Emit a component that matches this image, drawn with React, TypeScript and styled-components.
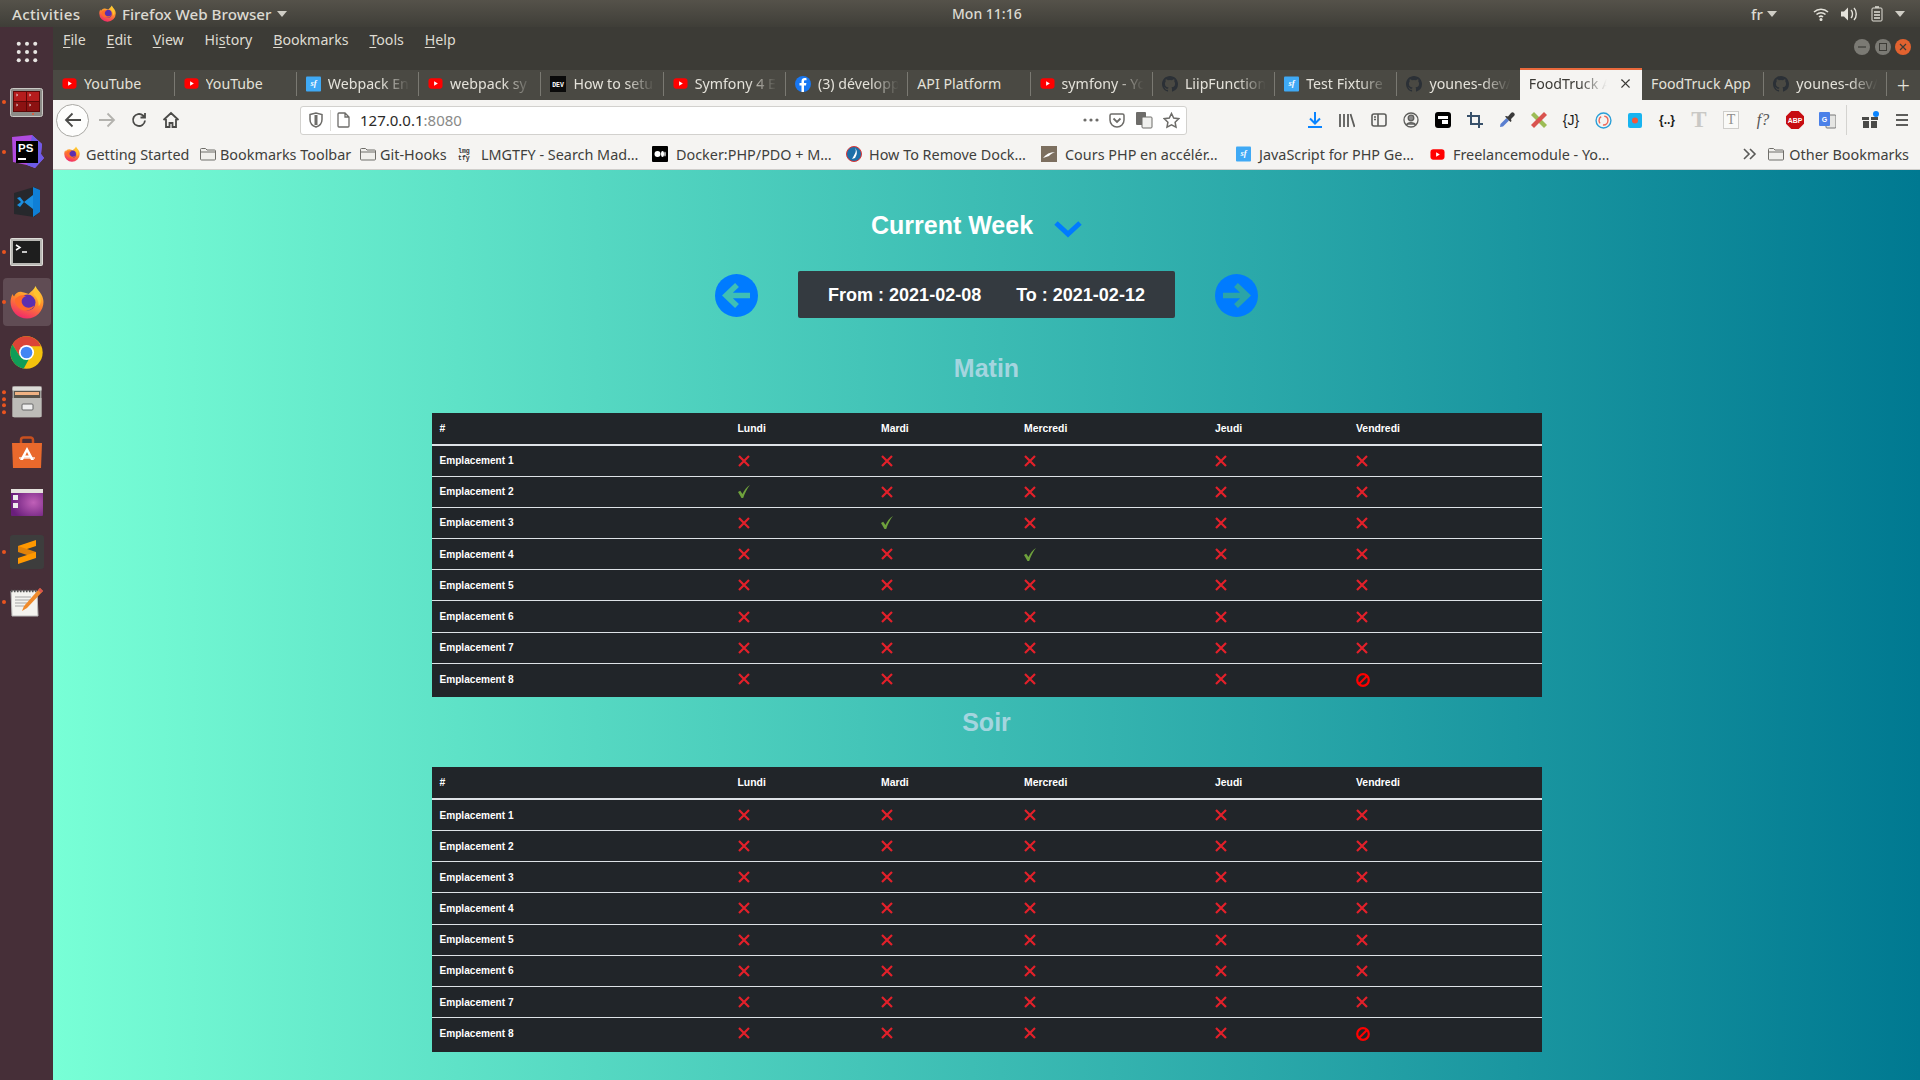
import styled, { createGlobalStyle } from 'styled-components'
import type { ReactNode } from 'react'
import { X } from 'lucide-react'

const GlobalStyle = createGlobalStyle`
    html, body { margin: 0; padding: 0; height: 100%; overflow: hidden; }
    body { font-family: "Noto Sans", sans-serif; }
    * { box-sizing: border-box; }
`

const Screen = styled.div`
    width: 1920px;
    height: 1080px;
    display: flex;
    flex-direction: column;
    overflow: hidden;
`

const TopBar = styled.div`
    height: 27px;
    flex: none;
    display: flex;
    align-items: center;
    padding: 0 15px 0 12px;
    color: #dcdad2;
    font-size: 15.2px;
    font-weight: 500;
    background: linear-gradient(#55524a, #3f3e38);
`

const BarSlot = styled.div<{ $w?: number; $size?: number; $gap?: number; $spacing?: number }>`
    display: flex;
    align-items: center;
    gap: ${p => p.$gap ?? 4}px;
    width: ${p => (p.$w ? `${p.$w}px` : 'auto')};
    font-size: ${p => (p.$size ? `${p.$size}px` : 'inherit')};
    letter-spacing: ${p => p.$spacing ?? 0}px;
    white-space: nowrap;
`

const Body = styled.div`
    flex: 1;
    display: flex;
    min-height: 0;
`

const Dock = styled.aside`
    width: 53px;
    flex: none;
    display: flex;
    flex-direction: column;
    align-items: center;
    background: #462f38;
`

const DockItem = styled.div<{ $active?: boolean }>`
    position: relative;
    width: 48px;
    height: 48px;
    margin: 1px 0;
    display: flex;
    align-items: center;
    justify-content: center;
    border-radius: 4px;
    background: ${p => (p.$active ? 'rgba(255,255,255,0.14)' : 'transparent')};
`

const Pips = styled.div`
    position: absolute;
    left: -0.5px;
    top: 50%;
    transform: translateY(-50%);
    display: flex;
    flex-direction: column;
    gap: 2.5px;
`

const Pip = styled.span`
    width: 4px;
    height: 4px;
    border-radius: 50%;
    background: #e95420;
`

const Main = styled.div`
    flex: 1;
    min-width: 0;
    display: flex;
    flex-direction: column;
`

const MenuBar = styled.div`
    height: 43px;
    flex: none;
    display: flex;
    align-items: flex-start;
    justify-content: space-between;
    background: #3c3b36;
    color: #dfdbd2;
    font-size: 14.2px;
    padding: 3px 9px 0 10px;
`

const MenuList = styled.div`
    display: flex;
    gap: 20.8px;

    u { text-underline-offset: 2px; }
`

const WindowButtons = styled.div`
    display: flex;
    gap: 4.5px;
    margin-top: 9px;
`

const WinButton = styled.span<{ $close?: boolean }>`
    width: 16px;
    height: 16px;
    border-radius: 50%;
    display: flex;
    align-items: center;
    justify-content: center;
    background: ${p => (p.$close ? '#e2622f' : '#7b7a74')};
    color: #3c3b36;
`

const TabStrip = styled.div`
    height: 30px;
    flex: none;
    display: flex;
    align-items: stretch;
    background: #4a4943;
    color: #e4e2da;
    font-size: 14.2px;
`

const Tab = styled.div<{ $active?: boolean; $w: number; $sep?: boolean }>`
    width: ${p => p.$w}px;
    flex: none;
    display: flex;
    align-items: center;
    gap: 7px;
    padding: 0 5px 3px 9px;
    margin-top: ${p => (p.$active ? '-2px' : '0')};
    white-space: nowrap;
    position: relative;
    background: ${p => (p.$active ? '#f5f4f2' : 'transparent')};
    color: ${p => (p.$active ? '#3b3a36' : '#e4e2da')};
    border-top: ${p => (p.$active ? '2px solid #e9693c' : 'none')};

    ${p =>
        p.$sep &&
        `&::after {
            content: '';
            position: absolute;
            right: 0;
            top: 2px;
            bottom: 4px;
            width: 1px;
            background: #7a7972;
        }`}
`

const TabTitle = styled.span<{ $fade?: boolean }>`
    flex: 1;
    overflow: hidden;
    ${p => p.$fade && 'mask-image: linear-gradient(to right, #000 62%, transparent 95%);'}
`

const TabClose = styled.span`
    display: flex;
    margin-right: 4px;
`

const NewTab = styled.div`
    flex: 1;
    display: flex;
    align-items: center;
    justify-content: center;
    font-size: 23px;
    font-weight: 300;
    color: #e4e2da;
`

const NavBar = styled.div`
    height: 40px;
    flex: none;
    display: flex;
    align-items: center;
    background: #f5f4f2;
    padding: 0 2px 0 3px;
`

const NavGroup = styled.div`
    display: flex;
    align-items: center;
    color: #4a4a48;
    gap: 14px;
    width: 244px;
`

const BackButton = styled.div`
    width: 33px;
    height: 33px;
    border-radius: 50%;
    border: 1px solid #a9a8a4;
    background: #fdfdfc;
    display: flex;
    align-items: center;
    justify-content: center;
    margin-right: -1px;
`

const UrlBar = styled.div`
    width: 887px;
    height: 29px;
    flex: none;
    display: flex;
    align-items: center;
    background: #fff;
    border: 1px solid #d2d1ce;
    border-radius: 3px;
    padding: 0 6px 0 8px;
    font-size: 15px;
    color: #2b2a28;
`

const UrlText = styled.div`
    flex: 1;
    display: flex;
    align-items: center;
    gap: 10px;
    margin-left: 7px;
    padding-left: 6px;
    border-left: 1px solid #dddcd9;
    height: 21px;

    span span { color: #8a8a88; }
`

const UrlActions = styled.div`
    display: flex;
    align-items: center;
    gap: 10px;
`

const ToolIcons = styled.div`
    flex: 1;
    display: flex;
    align-items: center;
    justify-content: flex-end;
    height: 34px;
`

const ToolIcon = styled.div`
    width: 32px;
    height: 30px;
    display: flex;
    align-items: center;
    justify-content: center;
    color: #4a4a48;
`

const ToolText = styled.span<{ $color?: string; $size?: number; $bold?: boolean; $italic?: boolean; $serif?: boolean }>`
    font-family: ${p => (p.$serif ? '"Liberation Serif", serif' : '"Liberation Sans", sans-serif')};
    font-size: ${p => p.$size ?? 14}px;
    font-weight: ${p => (p.$bold ? 700 : 400)};
    font-style: ${p => (p.$italic ? 'italic' : 'normal')};
    color: ${p => p.$color ?? '#1c1c1c'};
    white-space: nowrap;
`

const DocBox = styled.span`
    width: 16px;
    height: 18px;
    display: flex;
    align-items: center;
    justify-content: center;
    border: 1px solid #cfcecb;
    background: #fafaf8;
`

const ToolDivider = styled.div`
    width: 1px;
    height: 30px;
    background: #d4d3d0;
    margin: 0 7px 0 3px;
`

const BookmarkBar = styled.div`
    height: 30px;
    flex: none;
    display: flex;
    align-items: center;
    background: #f5f4f2;
    border-bottom: 1px solid #cfcecb;
    color: #403f3c;
    font-size: 14.4px;
    padding: 0 11px 1px 11px;
`

const Bookmark = styled.div<{ $w: number; $gap: number }>`
    width: ${p => p.$w}px;
    flex: none;
    display: flex;
    align-items: center;
    gap: ${p => p.$gap}px;
    white-space: nowrap;
`

const BookmarkEnd = styled.div`
    margin-left: auto;
    display: flex;
    align-items: center;
    gap: 5px;
    white-space: nowrap;

    svg:first-child { margin-right: 6px; }
`

const Page = styled.main`
    flex: 1;
    min-height: 0;
    background: linear-gradient(to right, #78ffd6, #007991);
    font-family: "Liberation Sans", Arial, sans-serif;
    display: flex;
    flex-direction: column;
    align-items: center;
    padding-top: 36px;
`

const WeekTitle = styled.div`
    height: 38px;
    display: flex;
    align-items: center;
    gap: 21px;
    margin-right: 20px;
    color: #fff;
    font-size: 25px;
    font-weight: 700;
`

const WeekNav = styled.div`
    margin-top: 27px;
    display: flex;
    align-items: center;
    gap: 40px;
`

const DateBox = styled.div`
    width: 377px;
    height: 47px;
    padding-top: 1px;
    display: flex;
    align-items: center;
    justify-content: center;
    gap: 35px;
    background: #343a40;
    border-radius: 2px;
    color: #fff;
    font-size: 18px;
    font-weight: 700;
`

const ArrowIcon = styled.svg`
    display: block;
    margin-top: 2px;
`

const Period = styled.h2<{ $top: number }>`
    margin: ${p => p.$top}px 0 27px;
    height: 36px;
    display: flex;
    align-items: center;
    font-size: 25px;
    font-weight: 700;
    color: #a4d5df;
`

const Slots = styled.table`
    width: 1110px;
    table-layout: fixed;
    border-collapse: collapse;
    background: #212529;
    color: #fff;
    font-size: 10.4px;
    font-weight: 700;
`

const HeadCell = styled.th`
    height: 32px;
    padding: 0 8px;
    text-align: left;
    vertical-align: middle;
    border-bottom: 2px solid #dee2e6;
`

const Cell = styled.td`
    height: 31.2px;
    padding: 0 8px;
    font-size: 10.1px;
    vertical-align: middle;
    border-bottom: 1px solid #dee2e6;

    tr:last-child & { border-bottom: none; height: 34px; padding-bottom: 3px; }
`

const Mark = styled.svg`
    display: block;
`

const youtube = (
    <svg width="15" height="15" viewBox="0 0 16 16">
        <rect x="0.5" y="2.5" width="15" height="11" rx="3" fill="#f00" />
        <path d="M6.5 5.5v5l4-2.5z" fill="#fff" />
    </svg>
)

const symfonyCasts = (
    <svg width="15" height="16" viewBox="0 0 16 16">
        <rect width="16" height="16" rx="1" fill="#3fa9f5" />
        <text x="8" y="10" fontSize="9" fontStyle="italic" fontWeight="700" fontFamily="Liberation Serif" fill="#fff" textAnchor="middle">sf</text>
    </svg>
)

const github = (color: string) => (
    <svg width="16" height="16" viewBox="0 0 16 16" fill={color}>
        <path d="M8 0C3.58 0 0 3.58 0 8c0 3.54 2.29 6.53 5.47 7.59.4.07.55-.17.55-.38v-1.34c-2.23.48-2.7-1.07-2.7-1.07-.36-.92-.89-1.17-.89-1.17-.73-.5.05-.49.05-.49.8.06 1.23.83 1.23.83.71 1.22 1.87.87 2.33.66.07-.52.28-.87.5-1.07-1.78-.2-3.64-.89-3.64-3.95 0-.87.31-1.59.82-2.15-.08-.2-.36-1.02.08-2.12 0 0 .67-.21 2.2.82a7.7 7.7 0 0 1 4 0c1.53-1.04 2.2-.82 2.2-.82.44 1.1.16 1.92.08 2.12.51.56.82 1.27.82 2.15 0 3.07-1.87 3.75-3.65 3.95.29.25.54.73.54 1.48v2.2c0 .21.15.46.55.38A8 8 0 0 0 16 8c0-4.42-3.58-8-8-8z" />
    </svg>
)

const firefox = (size: number) => (
    <svg width={size} height={size} viewBox="0 0 32 32">
        <defs>
            <linearGradient id={`fx${size}`} x1="0.7" y1="0" x2="0.3" y2="1">
                <stop offset="0" stopColor="#ffd43a" />
                <stop offset="0.45" stopColor="#ff8a2b" />
                <stop offset="1" stopColor="#f0246e" />
            </linearGradient>
        </defs>
        <path d="M24 1c1 3 4 5 5.500 8 1.500 2.500 2 5 2 7A15.500 15.500 0 0 1 .5 16c0-2 .5-5 2-7.500.3 1 .7 1.800 1.300 2.300C5 8 8 6 11 6.500c3 .3 5 1.500 6.500 2C20 6 23 4 24 1z" fill={`url(#fx${size})`} />
        <circle cx="16.500" cy="16.500" r="7.500" fill="#5b2fb0" />
        <path d="M5 13c3-3 7-4.500 10-2.500-2 .5-3.500 2-4 4-.3 2.500 1 5 4 6.500 3 1 6 0 8-2-2 5-9 7-14 3-3-2.500-5-6-4-9z" fill="#ff6a2b" />
        <path d="M24 3c2 3 5 6 5 12 0 2-1 4-2 5 0-4-1-8-5-11z" fill="#ffc42e" />
    </svg>
)

const folder = (
    <svg width="16" height="14" viewBox="0 0 16 14" fill="#f0efec" stroke="#6f6e6a">
        <path d="M.5 2.500a1 1 0 0 1 1-1h4l1.500 1.500h7.500a1 1 0 0 1 1 1v8a1 1 0 0 1-1 1h-13a1 1 0 0 1-1-1z" />
        <path d="M.5 5h15" />
    </svg>
)

const dockIcons: { icon: ReactNode; pips: number; active?: boolean }[] = [
    {
        pips: 1,
        icon: (
            <svg width="33" height="29" viewBox="0 0 33 29">
                <rect x="0.5" y="0.5" width="32" height="28" rx="2" fill="#8c8b87" stroke="#c9c8c4" />
                <rect x="3" y="3" width="27" height="21" fill="#5c0808" />
                <rect x="4" y="4" width="12" height="9" fill="#b41d1d" />
                <rect x="17" y="4" width="12" height="9" fill="#b41d1d" />
                <rect x="4" y="14" width="12" height="9" fill="#8c1212" />
                <rect x="17" y="14" width="12" height="9" fill="#8c1212" />
                <path d="M6 6l2 1-2 1M19 6l2 1-2 1M6 16l2 1-2 1M19 16l2 1-2 1" stroke="#eee" strokeWidth="0.6" fill="none" />
                <circle cx="23" cy="26" r="1" fill="#e53" />
            </svg>
        ),
    },
    {
        pips: 1,
        icon: (
            <svg width="34" height="34" viewBox="0 0 34 34">
                <path d="M2 2l20-2 10 9-1 10 3 4-9 10-8-3-5-1-9-2z" fill="#b04be0" />
                <path d="M22 0l10 9-1 10 3 4-9 10-8-3z" fill="#6d5ce8" />
                <rect x="6" y="6" width="22" height="22" fill="#000" />
                <text x="8" y="17" fontSize="11.500" fontWeight="700" fontFamily="Liberation Sans" fill="#fff">PS</text>
                <rect x="8" y="23" width="8" height="2" fill="#fff" />
            </svg>
        ),
    },
    {
        pips: 0,
        icon: (
            <svg width="28" height="30" viewBox="0 0 28 30">
                <path d="M1 6l20-6 6 3v22l-6 5-20-3z" fill="#26282c" />
                <path d="M20 0l7 3v22l-7 5z" fill="#0f7fd6" />
                <path d="M20 8l-9 7 9 7zM4 11l3-1 4 5-4 5-3-2 4-3z" fill="#1b8fe0" />
            </svg>
        ),
    },
    {
        pips: 1,
        icon: (
            <svg width="33" height="28" viewBox="0 0 33 28">
                <rect x="0.5" y="0.5" width="32" height="27" rx="1" fill="#b9b8b4" stroke="#dedcd8" />
                <rect x="3" y="3" width="27" height="22" fill="#1e1e1e" />
                <path d="M6 7l4 2.500-4 2.500" fill="none" stroke="#fff" strokeWidth="1.500" />
                <path d="M12 14h5" stroke="#fff" strokeWidth="1.500" />
            </svg>
        ),
    },
    { pips: 1, active: true, icon: firefox(34) },
    {
        pips: 0,
        icon: (
            <svg width="33" height="33" viewBox="0 0 48 48">
                <circle cx="24" cy="24" r="23.500" fill="#f4c20d" />
                <path d="M24 .5A23.500 23.500 0 0 0 3.600 12.200L14 29l10-14h20.900A23.500 23.500 0 0 0 24 .5z" fill="#db4437" />
                <path d="M3.600 12.200A23.500 23.500 0 0 0 20 47.200L29 31 14 29z" fill="#0f9d58" />
                <circle cx="24" cy="24" r="11" fill="#fff" />
                <circle cx="24" cy="24" r="8.500" fill="#4285f4" />
            </svg>
        ),
    },
    {
        pips: 4,
        icon: (
            <svg width="30" height="32" viewBox="0 0 30 32">
                <rect x="0.5" y="0.5" width="29" height="31" rx="2" fill="#a3a29e" />
                <rect x="0.5" y="0.5" width="29" height="4" fill="#dcdbd7" />
                <rect x="2" y="5" width="26" height="7" fill="#59534a" />
                <rect x="3" y="6" width="24" height="3" fill="#f0b182" />
                <rect x="0.5" y="12" width="29" height="19" fill="#bdbcb8" />
                <rect x="10" y="18" width="11" height="6" rx="1" fill="#eee" stroke="#666" />
            </svg>
        ),
    },
    {
        pips: 0,
        icon: (
            <svg width="30" height="32" viewBox="0 0 30 32">
                <path d="M0 7h30l-1 25H1z" fill="#e9692c" />
                <path d="M9 7V4a2.500 2.500 0 0 1 2.500-2.500h7A2.500 2.500 0 0 1 21 4v3" fill="none" stroke="#c8501f" strokeWidth="2.500" />
                <path d="M15 11l-7 13h3l1.200-2.500h5.600L19 24h3zm0 5l1.700 3.500h-3.400z" fill="#fff" />
                <path d="M7 22h16" stroke="#fff" strokeWidth="1.200" />
            </svg>
        ),
    },
    {
        pips: 0,
        icon: (
            <svg width="32" height="27" viewBox="0 0 32 27">
                <defs>
                    <radialGradient id="dash" cx="0.7" cy="0.5" r="0.7">
                        <stop offset="0" stopColor="#c060b8" />
                        <stop offset="1" stopColor="#6a1f7c" />
                    </radialGradient>
                </defs>
                <rect width="32" height="27" rx="1" fill="url(#dash)" />
                <rect width="32" height="4" fill="#e5e3de" />
                <rect x="2" y="6" width="5" height="5" fill="#eee" />
                <rect x="2" y="14" width="5" height="5" fill="#eee" />
            </svg>
        ),
    },
    {
        pips: 1,
        icon: (
            <svg width="34" height="34" viewBox="0 0 34 34">
                <rect width="34" height="34" rx="3" fill="#3d3d3d" />
                <path d="M26 5L8 11v6l18-6z" fill="#ff9800" />
                <path d="M8 17l18 6v-6L8 11z" fill="#e0820a" />
                <path d="M26 23L8 29v-6l18-6z" fill="#ff9800" />
            </svg>
        ),
    },
    {
        pips: 1,
        icon: (
            <svg width="33" height="29" viewBox="0 0 33 29">
                <path d="M1 3h26l1 25H2z" fill="#f4f3ef" stroke="#bbb" />
                <path d="M1 3h26" stroke="#555" strokeWidth="2.500" strokeDasharray="1.500 1.500" />
                <path d="M5 9h16M5 12h16M5 15h12M5 18h9" stroke="#a5a5a5" />
                <path d="M30 0l3 3-16 17-5 3 2-5z" fill="#ef8a2b" />
                <path d="M30 0l3 3-2 2-3-3z" fill="#d9534f" />
            </svg>
        ),
    },
]

const tabs: { title: string; w: number; icon?: ReactNode; fade?: boolean; active?: boolean; close?: boolean }[] = [
    { title: 'YouTube', w: 121.5, icon: youtube },
    { title: 'YouTube', w: 122.3, icon: youtube },
    { title: 'Webpack En', w: 122.3, icon: symfonyCasts, fade: true },
    { title: 'webpack sy', w: 122.3, icon: youtube, fade: true },
    {
        title: 'How to setu',
        w: 122.3,
        fade: true,
        icon: (
            <svg width="16" height="16" viewBox="0 0 16 16">
                <rect width="16" height="16" fill="#0a0a0a" />
                <text x="8" y="11" fontSize="6.500" fontWeight="700" fontFamily="Liberation Mono" fill="#fff" textAnchor="middle">DEV</text>
            </svg>
        ),
    },
    { title: 'Symfony 4 E', w: 122.3, icon: youtube, fade: true },
    {
        title: '(3) développ',
        w: 122.3,
        fade: true,
        icon: (
            <svg width="16" height="16" viewBox="0 0 16 16">
                <circle cx="8" cy="8" r="8" fill="#1877f2" />
                <path d="M9 16V9.500h2l.400-2.500H9V5.500c0-.7.300-1.200 1.300-1.200h1.200V2.200C11 2.100 10.400 2 9.700 2 7.800 2 6.500 3.200 6.500 5.200V7H4.500v2.500h2V16z" fill="#fff" />
            </svg>
        ),
    },
    { title: 'API Platform', w: 122.3 },
    { title: 'symfony - Yo', w: 122.3, icon: youtube, fade: true },
    { title: 'LiipFunction', w: 122.3, icon: github('#2b3036'), fade: true },
    { title: 'Test Fixture', w: 122.3, icon: symfonyCasts, fade: true },
    { title: 'younes-dev/', w: 122.3, icon: github('#2b3036'), fade: true },
    { title: 'FoodTruck A', w: 122.3, active: true, close: true, fade: true },
    { title: 'FoodTruck App', w: 122.3 },
    { title: 'younes-dev/', w: 122.3, icon: github('#2b3036'), fade: true },
]

const bookmarks: { title: string; w: number; gap: number; icon: ReactNode }[] = [
    { title: 'Getting Started', w: 136, gap: 6, icon: firefox(16) },
    { title: 'Bookmarks Toolbar', w: 160, gap: 4, icon: folder },
    { title: 'Git-Hooks', w: 97, gap: 4, icon: folder },
    {
        title: 'LMGTFY - Search Mad…',
        w: 195,
        gap: 8,
        icon: (
            <svg width="16" height="16" viewBox="0 0 16 16" fontFamily="Liberation Mono" fontSize="6.500" fontWeight="700" fill="#333">
                <text x="1" y="7">lmg</text>
                <text x="1" y="14">tfy</text>
            </svg>
        ),
    },
    {
        title: 'Docker:PHP/PDO + M…',
        w: 194,
        gap: 8,
        icon: (
            <svg width="16" height="16" viewBox="0 0 16 16">
                <rect width="16" height="16" rx="1" fill="#000" />
                <circle cx="5.500" cy="8" r="3" fill="#fff" />
                <ellipse cx="10.500" cy="8" rx="1.500" ry="3" fill="#fff" />
                <ellipse cx="13" cy="8" rx="0.700" ry="2.600" fill="#fff" />
            </svg>
        ),
    },
    {
        title: 'How To Remove Dock…',
        w: 195,
        gap: 7,
        icon: (
            <svg width="16" height="16" viewBox="0 0 16 16">
                <circle cx="8" cy="8" r="7.500" fill="#1d6fa8" stroke="#d33" />
                <path d="M9 2c2 3 0 6-3 11l3-1c2-3 3-7 0-10z" fill="#fff" />
            </svg>
        ),
    },
    {
        title: 'Cours PHP en accélér…',
        w: 195,
        gap: 8,
        icon: (
            <svg width="16" height="16" viewBox="0 0 16 16">
                <rect width="16" height="16" fill="#7c6f5f" />
                <path d="M2 12c3-4 7-6 12-6-3 1-5 3-6 4z" fill="#fff" />
            </svg>
        ),
    },
    { title: 'JavaScript for PHP Ge…', w: 194, gap: 8, icon: symfonyCasts },
    { title: 'Freelancemodule - Yo…', w: 200, gap: 8, icon: youtube },
]

const days = ['Lundi', 'Mardi', 'Mercredi', 'Jeudi', 'Vendredi']
const columnWidths = [298, 143.5, 143, 191, 141, 193.5]

type Status = 'no' | 'yes' | 'ban'

const morning: Status[][] = Array.from({ length: 8 }, (_, row) =>
    days.map((_, col) => (row === 7 && col === 4 ? 'ban' : row >= 1 && row <= 3 && row - 1 === col ? 'yes' : 'no')),
)
const evening: Status[][] = Array.from({ length: 8 }, (_, row) =>
    days.map((_, col) => (row === 7 && col === 4 ? 'ban' : 'no')),
)

const StatusMark = ({ status }: { status: Status }) => {
    if (status === 'yes') {
        return (
            <Mark width="12" height="13" viewBox="0 0 12 13">
                <path d="M0 7l2.200-1.200L4.500 9C6 5.500 8.500 2 12 0 9 3.500 7 8 5.200 13H3.500z" fill="#6ea13c" />
            </Mark>
        )
    }
    if (status === 'ban') {
        return (
            <Mark width="14" height="14" viewBox="0 0 14 14" fill="none" stroke="#f00" strokeWidth="2.200" style={{ marginTop: 2 }}>
                <circle cx="7" cy="7" r="5.800" />
                <path d="M3 11l8-8" />
            </Mark>
        )
    }
    return (
        <Mark width="12" height="12" viewBox="0 0 12 12" fill="none" stroke="#e3202a" strokeWidth="2.200">
            <path d="M1 1l10 10M11 1L1 11" />
        </Mark>
    )
}

const SlotTable = ({ rows }: { rows: Status[][] }) => (
    <Slots>
        <colgroup>
            {columnWidths.map((w, i) => (
                <col key={i} width={w} />
            ))}
        </colgroup>
        <thead>
            <tr>
                <HeadCell>#</HeadCell>
                {days.map(day => (
                    <HeadCell key={day}>{day}</HeadCell>
                ))}
            </tr>
        </thead>
        <tbody>
            {rows.map((row, i) => (
                <tr key={i}>
                    <Cell>Emplacement {i + 1}</Cell>
                    {row.map((status, j) => (
                        <Cell key={j}>
                            <StatusMark status={status} />
                        </Cell>
                    ))}
                </tr>
            ))}
        </tbody>
    </Slots>
)

const ArrowButton = ({ dir }: { dir: 'left' | 'right' }) => (
    <ArrowIcon width="43" height="43" viewBox="0 0 43 43">
        <circle cx="21.500" cy="21.500" r="21.500" fill="#007bff" />
        <path
            d={dir === 'left' ? 'M35 21.500H12M22 11L11 21.500 22 32' : 'M8 21.500h23M21 11l11 10.500L21 32'}
            fill="none"
            stroke={dir === 'left' ? '#3fbfb5' : '#2ba4a8'}
            strokeWidth="5.500"
        />
    </ArrowIcon>
)

const caret = (
    <svg width="10" height="6" viewBox="0 0 10 6" fill="#cfcdc5"><path d="M0 0h10L5 6z" /></svg>
)

export default function App() {
    return (
        <Screen>
            <GlobalStyle />
            <TopBar>
                <BarSlot $w={87} $spacing={0.3}>Activities</BarSlot>
                <BarSlot $w={853} $gap={6}>
                    {firefox(17)}
                    <span>Firefox Web Browser</span>
                    {caret}
                </BarSlot>
                <BarSlot $w={799} $size={14}>Mon 11:16</BarSlot>
                <BarSlot $w={62}>
                    fr
                    {caret}
                </BarSlot>
                <BarSlot>
                    <svg width="16" height="14" viewBox="0 0 16 14" fill="none" stroke="#e4e2da" strokeWidth="1.500">
                        <path d="M1 5a10 10 0 0 1 14 0M3.500 7.500a6.500 6.500 0 0 1 9 0M6 10a3 3 0 0 1 4 0" />
                        <circle cx="8" cy="12.500" r="0.800" fill="#e4e2da" />
                    </svg>
                    <svg width="18" height="14" viewBox="0 0 18 14" fill="#e4e2da" style={{ marginLeft: 8 }}>
                        <path d="M0 4.500h3l4-4v13l-4-4H0z" />
                        <path d="M10 3c2 2 2 6 0 8M13 1c3 3 3 9 0 12" fill="none" stroke="#e4e2da" strokeWidth="1.400" />
                    </svg>
                    <svg width="12" height="16" viewBox="0 0 12 16" fill="none" stroke="#e4e2da" style={{ marginLeft: 8 }}>
                        <rect x="1" y="2" width="10" height="13" rx="1" />
                        <path d="M4 1h4M3 6h6M3 9h6M3 12h6" strokeWidth="1.500" />
                    </svg>
                    <svg width="10" height="6" viewBox="0 0 10 6" fill="#cfcdc5" style={{ marginLeft: 8 }}><path d="M0 0h10L5 6z" /></svg>
                </BarSlot>
            </TopBar>
            <Body>
                <Dock>
                    <DockItem>
                        <svg width="22" height="22" viewBox="0 0 24 24" fill="#e8e6e3">
                            {[3, 12, 21].flatMap(y =>
                                [3, 12, 21].map(x => <circle key={`${x}${y}`} cx={x} cy={y} r="2.200" />),
                            )}
                        </svg>
                    </DockItem>
                    {dockIcons.map((item, i) => (
                        <DockItem key={i} $active={item.active}>
                            <Pips>
                                {Array.from({ length: item.pips }, (_, k) => (
                                    <Pip key={k} />
                                ))}
                            </Pips>
                            {item.icon}
                        </DockItem>
                    ))}
                </Dock>
                <Main>
                    <MenuBar>
                        <MenuList>
                            <span><u>F</u>ile</span>
                            <span><u>E</u>dit</span>
                            <span><u>V</u>iew</span>
                            <span>Hi<u>s</u>tory</span>
                            <span><u>B</u>ookmarks</span>
                            <span><u>T</u>ools</span>
                            <span><u>H</u>elp</span>
                        </MenuList>
                        <WindowButtons>
                            <WinButton>
                                <svg width="8" height="2" viewBox="0 0 8 2"><path d="M0 1h8" stroke="#3c3b36" strokeWidth="1.200" /></svg>
                            </WinButton>
                            <WinButton>
                                <svg width="8" height="8" viewBox="0 0 8 8" fill="none"><rect x="0.5" y="0.5" width="7" height="7" stroke="#3c3b36" /></svg>
                            </WinButton>
                            <WinButton $close>
                                <svg width="8" height="8" viewBox="0 0 8 8"><path d="M1 1l6 6M7 1L1 7" stroke="#3c3b36" strokeWidth="1.200" /></svg>
                            </WinButton>
                        </WindowButtons>
                    </MenuBar>
                    <TabStrip>
                        {tabs.map((tab, i) => (
                            <Tab key={i} $w={tab.w} $active={tab.active} $sep={!tab.active && i !== 11}>
                                {tab.icon}
                                <TabTitle $fade={tab.fade}>{tab.title}</TabTitle>
                                {tab.close && (
                                    <TabClose>
                                        <X size={15} strokeWidth={1.8} />
                                    </TabClose>
                                )}
                            </Tab>
                        ))}
                        <NewTab>+</NewTab>
                    </TabStrip>
                    <NavBar>
                        <NavGroup>
                            <BackButton>
                                <svg width="18" height="16" viewBox="0 0 18 16" fill="none" stroke="#4a4a48" strokeWidth="1.800">
                                    <path d="M17 8H2M8.500 1.500L2 8l6.500 6.500" />
                                </svg>
                            </BackButton>
                            <svg width="18" height="16" viewBox="0 0 18 16" fill="none" stroke="#b3b2ae" strokeWidth="1.800" style={{ marginLeft: -4 }}>
                                <path d="M1 8h15M9.500 1.500L16 8l-6.500 6.500" />
                            </svg>
                            <svg width="18" height="18" viewBox="0 0 18 18" fill="none" stroke="#4a4a48" strokeWidth="1.800">
                                <path d="M15 9.500A6 6 0 1 1 13 4.500L15 6.500M15 2v4.500h-4.500" />
                            </svg>
                            <svg width="18" height="18" viewBox="0 0 18 18" fill="none" stroke="#4a4a48" strokeWidth="1.800">
                                <path d="M1.500 9L9 2l7.500 7M4 8v8h3.500v-4h3v4H14V8" />
                            </svg>
                        </NavGroup>
                        <UrlBar>
                            <svg width="14" height="16" viewBox="0 0 14 16" fill="none" stroke="#6d6c69" strokeWidth="1.500">
                                <path d="M1 2.500L7 1l6 1.500v5c0 4-3 6.500-6 7.500-3-1-6-3.500-6-7.500z" />
                                <path d="M7 3v10" strokeWidth="3" />
                            </svg>
                            <UrlText>
                                <svg width="13" height="16" viewBox="0 0 13 16" fill="none" stroke="#6d6c69" strokeWidth="1.300">
                                    <path d="M1 2a1 1 0 0 1 1-1h6l4 4v9a1 1 0 0 1-1 1H2a1 1 0 0 1-1-1zM8 1v4h4" />
                                </svg>
                                <span>127.0.0.1<span>:8080</span></span>
                            </UrlText>
                            <UrlActions>
                                <svg width="16" height="4" viewBox="0 0 16 4" fill="#6d6c69">
                                    <circle cx="2" cy="2" r="1.600" /><circle cx="8" cy="2" r="1.600" /><circle cx="14" cy="2" r="1.600" />
                                </svg>
                                <svg width="16" height="15" viewBox="0 0 16 15" fill="none" stroke="#6d6c69" strokeWidth="1.500">
                                    <path d="M1 2.500A1.500 1.500 0 0 1 2.500 1h11A1.500 1.500 0 0 1 15 2.500V7a7 7 0 0 1-14 0z" />
                                    <path d="M4.500 5.500L8 9l3.500-3.500" strokeWidth="1.800" />
                                </svg>
                                <svg width="18" height="18" viewBox="0 0 18 18">
                                    <rect x="1" y="1" width="10" height="13" rx="1" fill="#6d6c69" />
                                    <rect x="7" y="6" width="10" height="11" rx="1" fill="#f0f0ee" stroke="#6d6c69" />
                                </svg>
                                <svg width="17" height="17" viewBox="0 0 17 17" fill="none" stroke="#6d6c69" strokeWidth="1.500">
                                    <path d="M8.500 1.500l2.200 4.500 5 .7-3.600 3.500.9 5-4.500-2.400L4 15.200l.9-5L1.300 6.700l5-.7z" />
                                </svg>
                            </UrlActions>
                        </UrlBar>
                        <ToolIcons>
                            <ToolIcon>
                                <svg width="16" height="16" viewBox="0 0 16 16" fill="none" stroke="#0a84ff" strokeWidth="2">
                                    <path d="M8 0v11M3 6.500L8 11.500l5-5M1 15h14" />
                                </svg>
                            </ToolIcon>
                            <ToolIcon>
                                <svg width="16" height="15" viewBox="0 0 16 15" stroke="#5d5d5b" strokeWidth="1.800" fill="none">
                                    <path d="M1 1v13M5 1v13M9 1v13M11.500 1l4 13" />
                                </svg>
                            </ToolIcon>
                            <ToolIcon>
                                <svg width="16" height="14" viewBox="0 0 16 14" fill="none" stroke="#5d5d5b" strokeWidth="1.600">
                                    <rect x="1" y="1" width="14" height="12" rx="2" />
                                    <path d="M7 1v12M3 4h2M3 6.500h2" />
                                </svg>
                            </ToolIcon>
                            <ToolIcon>
                                <svg width="16" height="16" viewBox="0 0 16 16" fill="none" stroke="#5d5d5b" strokeWidth="1.300">
                                    <circle cx="8" cy="8" r="7" />
                                    <circle cx="8" cy="6" r="2.800" fill="#888" />
                                    <path d="M3.500 13c1-3 8-3 9 0" fill="#888" />
                                </svg>
                            </ToolIcon>
                            <ToolIcon>
                                <svg width="16" height="16" viewBox="0 0 16 16">
                                    <rect width="16" height="16" rx="3" fill="#000" />
                                    <path d="M3 4h10v3H3zM7 8h6v4H7z" fill="#fff" />
                                </svg>
                            </ToolIcon>
                            <ToolIcon>
                                <svg width="16" height="16" viewBox="0 0 16 16" fill="none" stroke="#38506a" strokeWidth="2">
                                    <path d="M4 0v12h12M0 4h12v12" />
                                </svg>
                            </ToolIcon>
                            <ToolIcon>
                                <svg width="16" height="16" viewBox="0 0 16 16">
                                    <path d="M1 15l.5-3 6-6 2.500 2.500-6 6z" fill="#5a7fd0" />
                                    <path d="M7 4l2 .5 3-3.500a2 2 0 0 1 3 3l-3 3 .5 2-1 1-5.500-5.500z" fill="#3a3a3a" />
                                </svg>
                            </ToolIcon>
                            <ToolIcon>
                                <svg width="18" height="18" viewBox="0 0 18 18">
                                    <path d="M1 4l3-3 13 13-3 3z" fill="#9cbc55" />
                                    <path d="M17 4l-3-3L1 14l3 3z" fill="#d9534f" />
                                </svg>
                            </ToolIcon>
                            <ToolIcon><ToolText>{'{J}'}</ToolText></ToolIcon>
                            <ToolIcon>
                                <svg width="17" height="17" viewBox="0 0 16 16" fill="none">
                                    <circle cx="8" cy="8" r="7" stroke="#2a9fd8" strokeWidth="1.300" />
                                    <circle cx="8" cy="8" r="4.200" stroke="#e65" strokeWidth="1.300" strokeDasharray="7 3" />
                                </svg>
                            </ToolIcon>
                            <ToolIcon>
                                <svg width="14" height="15" viewBox="0 0 14 15">
                                    <rect width="14" height="15" rx="2" fill="#18b4f0" />
                                    <circle cx="7" cy="7.500" r="3" fill="#f4573a" />
                                </svg>
                            </ToolIcon>
                            <ToolIcon><ToolText $bold $size={12}>{'{..}'}</ToolText></ToolIcon>
                            <ToolIcon><ToolText $serif $bold $size={23} $color="#c9c8c5">T</ToolText></ToolIcon>
                            <ToolIcon>
                                <DocBox><ToolText $serif $size={14} $color="#8f8e8b">T</ToolText></DocBox>
                            </ToolIcon>
                            <ToolIcon><ToolText $serif $italic $size={16} $color="#555">f?</ToolText></ToolIcon>
                            <ToolIcon>
                                <svg width="18" height="18" viewBox="0 0 17 17">
                                    <path d="M5 0h7l5 5v7l-5 5H5l-5-5V5z" fill="#c70d12" />
                                    <text x="8.500" y="11" fontSize="6.500" fontWeight="700" fontFamily="Liberation Sans" fill="#fff" textAnchor="middle">ABP</text>
                                </svg>
                            </ToolIcon>
                            <ToolIcon>
                                <svg width="17" height="17" viewBox="0 0 17 17">
                                    <rect x="7" y="3" width="10" height="13" rx="1" fill="#e5e5e3" stroke="#777" />
                                    <rect x="0" y="0" width="11" height="14" rx="1" fill="#4a80e8" />
                                    <text x="5.500" y="9.500" fontSize="7" fontWeight="700" fontFamily="Liberation Sans" fill="#fff" textAnchor="middle">G</text>
                                </svg>
                            </ToolIcon>
                            <ToolDivider />
                            <ToolIcon>
                                <svg width="18" height="18" viewBox="0 0 18 18">
                                    <path d="M1 6h7v3H1zM10 6h7v3h-7zM2 10h6v7H2zM10 10h6v7h-6z" fill="#4a4a48" />
                                    <circle cx="15" cy="3" r="3" fill="#0a84ff" />
                                </svg>
                            </ToolIcon>
                            <ToolIcon>
                                <svg width="14" height="12" viewBox="0 0 14 12" stroke="#5d5d5b" strokeWidth="2">
                                    <path d="M1 1h12M1 6h12M1 11h12" />
                                </svg>
                            </ToolIcon>
                        </ToolIcons>
                    </NavBar>
                    <BookmarkBar>
                        {bookmarks.map(b => (
                            <Bookmark key={b.title} $w={b.w} $gap={b.gap}>
                                {b.icon}
                                <span>{b.title}</span>
                            </Bookmark>
                        ))}
                        <BookmarkEnd>
                            <svg width="14" height="12" viewBox="0 0 14 12" fill="none" stroke="#5a5a58" strokeWidth="1.600">
                                <path d="M1 1l5 5-5 5M7 1l5 5-5 5" />
                            </svg>
                            {folder}
                            Other Bookmarks
                        </BookmarkEnd>
                    </BookmarkBar>
                    <Page>
                        <WeekTitle>
                            Current Week
                            <svg width="28" height="18" viewBox="0 0 28 18" fill="none" stroke="#007bff" strokeWidth="5" style={{ marginTop: 8 }}>
                                <path d="M2 3l12 11L26 3" />
                            </svg>
                        </WeekTitle>
                        <WeekNav>
                            <ArrowButton dir="left" />
                            <DateBox>
                                <span>From : 2021-02-08</span>
                                <span>To : 2021-02-12</span>
                            </DateBox>
                            <ArrowButton dir="right" />
                        </WeekNav>
                        <Period $top={32}>Matin</Period>
                        <SlotTable rows={morning} />
                        <Period $top={7}>Soir</Period>
                        <SlotTable rows={evening} />
                    </Page>
                </Main>
            </Body>
        </Screen>
    )
}
